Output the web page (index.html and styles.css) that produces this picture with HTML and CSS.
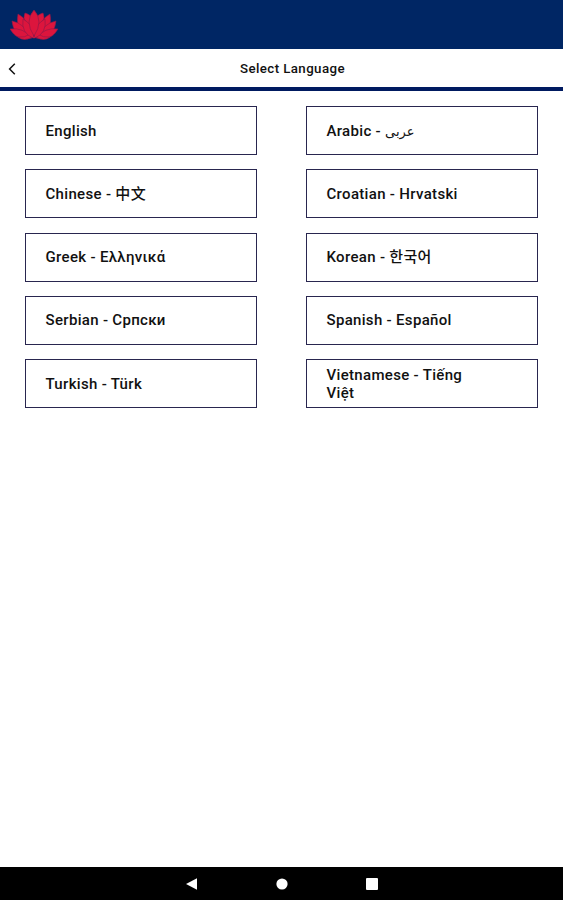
FILE: index.html
```html
<!DOCTYPE html>
<html lang="en">
	<head>
		<meta charset="UTF-8">
		<title>Select Language</title>
		<link rel="stylesheet" href="styles.css">
	</head>
	<body>
		<header class="top">
			<svg class="logo" viewBox="0 0 48 30">
				<path d="M15 13Q13 7 15 3Q20 4 23 9V20ZM33 13Q35 7 33 3Q28 4 25 9V20Z"/>
				<path d="M17 27Q5 19 8 4Q18 9 21 24ZM31 27Q43 19 40 4Q30 9 27 24Z"/>
				<path d="M18 29Q3 25 2 11Q14 13 20 27ZM30 29Q45 25 46 11Q34 13 28 27Z"/>
				<path d="M22 28Q7 32 0 19Q13 17 22 28ZM26 28Q41 32 48 19Q35 17 26 28Z"/>
				<path d="M22 27Q14 32 8 27Q15 28 20 24ZM26 27Q34 32 40 27Q33 28 28 24Z"/>
				<path d="M23 28Q11 23 13 9Q23 14 24 27Q25 14 35 9Q37 23 25 28Z"/>
				<path d="M24 0Q14 11 24 26Q34 11 24 0Z"/>
			</svg>
		</header>
		<div class="title">
			<svg class="back" viewBox="0 0 8 12">
				<path d="M6.8 .8L1.6 6L6.8 11.2"/>
			</svg>
			<h1>Select Language</h1>
		</div>
		<ul class="langs">
			<li><span>English</span></li>
			<li><span>Arabic - <bdi class="arabic" lang="ar">عربى</bdi></span></li>
			<li><span>Chinese - <b lang="zh">中文</b></span></li>
			<li><span>Croatian - Hrvatski</span></li>
			<li><span>Greek - Ελληνικά</span></li>
			<li><span>Korean - <b lang="ko">한국어</b></span></li>
			<li><span>Serbian - Српски</span></li>
			<li><span>Spanish - Español</span></li>
			<li><span>Turkish - Türk</span></li>
			<li><span>Vietnamese - Tiếng Việt</span></li>
		</ul>
		<footer class="nav">
			<svg viewBox="0 0 12 12"><path d="M0 6L11 .3V11.7Z"/></svg>
			<svg viewBox="0 0 12 12"><circle cx="6" cy="6" r="5.6"/></svg>
			<svg viewBox="0 0 12 12"><rect width="12" height="12" rx="1"/></svg>
		</footer>
	</body>
</html>
```
FILE: styles.css
```css
*{
	padding: 0;margin: 0;
	box-sizing: border-box;
}
body{
	height: 100vh;
	display: flex;
	flex-direction: column;
	background: #fff;
	color: #111;
	font-family: Roboto,"Noto Sans CJK SC","DejaVu Sans",sans-serif;
}
.top{
	height: 49px;
	padding: 10px;
	background: #002664;
}
.logo{
	display: block;
	width: 48px;height: 30px;
	fill: #dc153d;
	stroke: #8a1a4a;
	stroke-width: .6;
}
.title{
	height: 42px;
	display: grid;
	grid-template-columns: 22px 1fr 22px;
	align-items: center;
	border-bottom: 4px solid #001a60;
}
.back{
	width: 8px;height: 12px;
	margin: 2px 0 0 8px;
	fill: none;
	stroke: #111;
	stroke-width: 1.5;
}
.title h1{
	padding-left: 22px;
	font-size: 13.3px;
	font-weight: 500;
	letter-spacing: .4px;
	text-align: center;
}
.langs{
	flex: 1;
	display: grid;
	grid-template-columns: 232px 232px;
	grid-auto-rows: 49px;
	align-content: start;
	gap: 14.3px 49px;
	padding: 15px 25px;
	list-style: none;
}
.langs li{
	display: flex;
	align-items: center;
	padding: 0 60px 0 19.5px;
	border: 1px solid #29264f;
	font-size: 15px;
	font-weight: 500;
	line-height: 18px;
	letter-spacing: .32px;
}
.langs b{
	font-weight: 500;
	line-height: 1;
}
.langs b[lang="ko"]{
	font-family: "Noto Sans CJK KR",sans-serif;
}
.arabic{
	font-family: "DejaVu Sans",sans-serif;
	font-size: 13px;
	font-weight: 400;
	line-height: 1;
	letter-spacing: 0;
}
.nav{
	height: 33px;
	display: flex;
	justify-content: center;
	align-items: center;
	gap: 78px;
	background: #000;
}
.nav svg{
	width: 12px;height: 12px;
	fill: #fff;
}
```
